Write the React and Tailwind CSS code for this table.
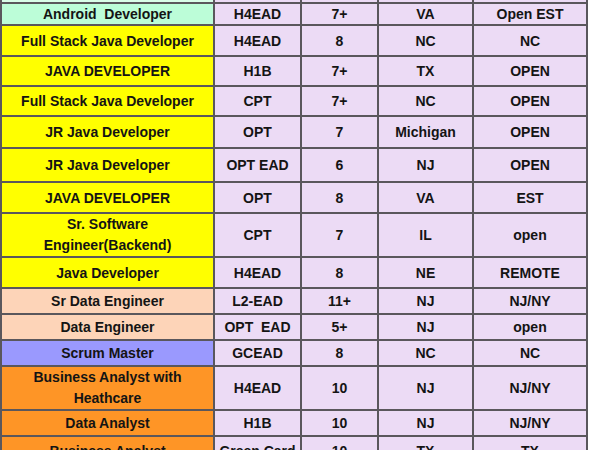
import React from "react";

const rows = [
  { h: 22, c: "bg-[#bcfdd8]", t: ["Android  Developer", "H4EAD", "7+", "VA", "Open EST"] },
  { h: 31, c: "bg-[#ffff00]", t: ["Full Stack Java Developer", "H4EAD", "8", "NC", "NC"] },
  { h: 30, c: "bg-[#ffff00]", t: ["JAVA DEVELOPER", "H1B", "7+", "TX", "OPEN"] },
  { h: 30, c: "bg-[#ffff00]", t: ["Full Stack Java Developer", "CPT", "7+", "NC", "OPEN"] },
  { h: 32, c: "bg-[#ffff00]", t: ["JR Java Developer", "OPT", "7", "Michigan", "OPEN"] },
  { h: 34, c: "bg-[#ffff00]", t: ["JR Java Developer", "OPT EAD", "6", "NJ", "OPEN"] },
  { h: 31, c: "bg-[#ffff00]", t: ["JAVA DEVELOPER", "OPT", "8", "VA", "EST"] },
  { h: 44, c: "bg-[#ffff00]", t: [["Sr. Software", "Engineer(Backend)"], "CPT", "7", "IL", "open"] },
  { h: 31, c: "bg-[#ffff00]", t: ["Java Developer", "H4EAD", "8", "NE", "REMOTE"] },
  { h: 26, c: "bg-[#fdd4b8]", t: ["Sr Data Engineer", "L2-EAD", "11+", "NJ", "NJ/NY"] },
  { h: 26, c: "bg-[#fdd4b8]", t: ["Data Engineer", "OPT  EAD", "5+", "NJ", "open"] },
  { h: 26, c: "bg-[#9a99fe]", t: ["Scrum Master", "GCEAD", "8", "NC", "NC"] },
  { h: 44, c: "bg-[#fe9526]", t: [["Business Analyst with", "Heathcare"], "H4EAD", "10", "NJ", "NJ/NY"] },
  { h: 26, c: "bg-[#fe9526]", t: ["Data Analyst", "H1B", "10", "NJ", "NJ/NY"] },
  { h: 30, c: "bg-[#fe9526]", t: ["Business Analyst", "Green Card", "10", "TX", "TX"] },
];

const widths = ["w-[213px]", "w-[87px]", "w-[77px]", "w-[95px]", "w-[114px]"];

function Cell({ w, bg, children, h }) {
  return (
    <div
      className={`${w} ${bg} shrink-0 border-r-2 border-b-2 border-[#5a575c] flex flex-col items-center justify-center text-center`}
      style={{ height: h }}
    >
      {Array.isArray(children)
        ? children.map((l, i) => (
            <div key={i} className="leading-[21px] whitespace-pre">{l}</div>
          ))
        : <div className="leading-[16px] whitespace-pre">{children}</div>}
    </div>
  );
}

export default function App() {
  return (
    <div className="w-[600px] h-[450px] overflow-hidden bg-white">
      <div
        className="border-l-2 border-[#5a575c] w-[588px] text-[14px] font-bold text-[#141414]"
        style={{ fontFamily: '"Liberation Sans", Arial, sans-serif' }}
      >
        <div className="flex">
          {widths.map((w, i) => (
            <div
              key={i}
              className={`${w} ${i === 0 ? "bg-[#d9fde8]" : "bg-[#ecdbf5]"} shrink-0 h-[4px] border-r-2 border-b-2 border-[#5a575c]`}
            />
          ))}
        </div>
        {rows.map((r, ri) => (
          <div key={ri} className="flex">
            {r.t.map((t, i) => (
              <Cell key={i} w={widths[i]} bg={i === 0 ? r.c : "bg-[#ecdbf5]"} h={r.h}>
                {t}
              </Cell>
            ))}
          </div>
        ))}
      </div>
    </div>
  );
}
